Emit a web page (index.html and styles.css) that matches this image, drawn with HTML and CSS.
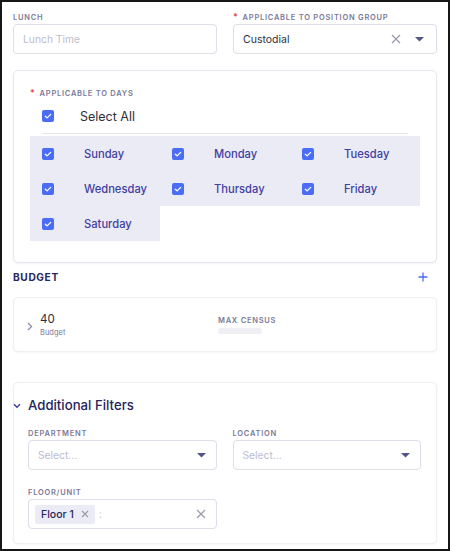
FILE: index.html
```html
<!DOCTYPE html>
<html>
<head>
<meta charset="utf-8">
<link rel="stylesheet" href="styles.css">
</head>
<body>
<div class="page">
  <div class="row2 top">
    <div class="field">
      <div class="lbl">Lunch</div>
      <div class="input"><span class="ph">Lunch Time</span></div>
    </div>
    <div class="field">
      <div class="lbl"><span class="req">*</span>Applicable to Position Group</div>
      <div class="input">
        <span class="val">Custodial</span>
        <span class="icons">
          <svg class="xicon" width="10" height="10" viewBox="0 0 10 10"><path d="M1 1L9 9M9 1L1 9" stroke="#9a9aa8" stroke-width="1.2" fill="none"/></svg>
          <svg class="caret" width="9" height="5" viewBox="0 0 9 5"><path d="M0 0H9L4.5 4.5Z" fill="#55548a"/></svg>
        </span>
      </div>
    </div>
  </div>

  <div class="card days">
    <div class="lbl"><span class="req">*</span>Applicable to Days</div>
    <div class="selall">
      <span class="cb"><svg width="12" height="12" viewBox="0 0 12 12"><path d="M3.3 6.2L5.1 7.9L8.7 4.4" stroke="#fff" stroke-width="1.3" fill="none" stroke-linecap="round" stroke-linejoin="round"/></svg></span>
      <span class="saltxt">Select All</span>
    </div>
    <div class="daygrid">
      <div class="day"><span class="cb"><svg width="12" height="12" viewBox="0 0 12 12"><path d="M3.3 6.2L5.1 7.9L8.7 4.4" stroke="#fff" stroke-width="1.3" fill="none" stroke-linecap="round" stroke-linejoin="round"/></svg></span><span class="dtxt">Sunday</span></div>
      <div class="day"><span class="cb"><svg width="12" height="12" viewBox="0 0 12 12"><path d="M3.3 6.2L5.1 7.9L8.7 4.4" stroke="#fff" stroke-width="1.3" fill="none" stroke-linecap="round" stroke-linejoin="round"/></svg></span><span class="dtxt">Monday</span></div>
      <div class="day"><span class="cb"><svg width="12" height="12" viewBox="0 0 12 12"><path d="M3.3 6.2L5.1 7.9L8.7 4.4" stroke="#fff" stroke-width="1.3" fill="none" stroke-linecap="round" stroke-linejoin="round"/></svg></span><span class="dtxt">Tuesday</span></div>
      <div class="day"><span class="cb"><svg width="12" height="12" viewBox="0 0 12 12"><path d="M3.3 6.2L5.1 7.9L8.7 4.4" stroke="#fff" stroke-width="1.3" fill="none" stroke-linecap="round" stroke-linejoin="round"/></svg></span><span class="dtxt">Wednesday</span></div>
      <div class="day"><span class="cb"><svg width="12" height="12" viewBox="0 0 12 12"><path d="M3.3 6.2L5.1 7.9L8.7 4.4" stroke="#fff" stroke-width="1.3" fill="none" stroke-linecap="round" stroke-linejoin="round"/></svg></span><span class="dtxt">Thursday</span></div>
      <div class="day"><span class="cb"><svg width="12" height="12" viewBox="0 0 12 12"><path d="M3.3 6.2L5.1 7.9L8.7 4.4" stroke="#fff" stroke-width="1.3" fill="none" stroke-linecap="round" stroke-linejoin="round"/></svg></span><span class="dtxt">Friday</span></div>
      <div class="day"><span class="cb"><svg width="12" height="12" viewBox="0 0 12 12"><path d="M3.3 6.2L5.1 7.9L8.7 4.4" stroke="#fff" stroke-width="1.3" fill="none" stroke-linecap="round" stroke-linejoin="round"/></svg></span><span class="dtxt">Saturday</span></div>
    </div>
  </div>

  <div class="budgethead">
    <span class="bh">Budget</span>
    <svg width="10" height="10" viewBox="0 0 10 10"><path d="M5 0.5V9.5M0.5 5H9.5" stroke="#4a6cf7" stroke-width="1.3" fill="none"/></svg>
  </div>

  <div class="card budget">
    <div class="bcol">
      <svg class="chev" width="6" height="9" viewBox="0 0 6 9"><path d="M1 1L4.5 4.5L1 8" stroke="#8a89a8" stroke-width="1.3" fill="none"/></svg>
      <div>
        <div class="num">40</div>
        <div class="sub">Budget</div>
      </div>
    </div>
    <div class="mcol">
      <div class="lbl">Max Census</div>
      <div class="skel"></div>
    </div>
  </div>

  <div class="card filters">
    <div class="fhead">
      <svg class="chevd" width="8" height="6" viewBox="0 0 8 6"><path d="M1 1.2L4 4.2L7 1.2" stroke="#3d3c96" stroke-width="1.4" fill="none"/></svg>
      <span>Additional Filters</span>
    </div>
    <div class="row2 frow">
      <div class="field">
        <div class="lbl">Department</div>
        <div class="input"><span class="ph">Select...</span>
          <svg class="caret" width="9" height="5" viewBox="0 0 9 5"><path d="M0 0H9L4.5 4.5Z" fill="#55548a"/></svg>
        </div>
      </div>
      <div class="field">
        <div class="lbl">Location</div>
        <div class="input"><span class="ph">Select...</span>
          <svg class="caret" width="9" height="5" viewBox="0 0 9 5"><path d="M0 0H9L4.5 4.5Z" fill="#55548a"/></svg>
        </div>
      </div>
    </div>
    <div class="row2 frow2">
      <div class="field">
        <div class="lbl">Floor/Unit</div>
        <div class="input multi">
          <span class="tag">Floor 1
            <svg width="8" height="8" viewBox="0 0 8 8"><path d="M1 1L7 7M7 1L1 7" stroke="#9a9aa8" stroke-width="1.1" fill="none"/></svg>
          </span>
          <span class="colon">:</span>
          <svg class="clr" width="10" height="10" viewBox="0 0 10 10"><path d="M1 1L9 9M9 1L1 9" stroke="#9a9aa8" stroke-width="1.2" fill="none"/></svg>
        </div>
      </div>
      <div class="field"></div>
    </div>
  </div>
</div>
</body>
</html>
```

FILE: styles.css
```css
* { box-sizing: border-box; }
html, body { margin: 0; padding: 0; }
body {
  width: 450px;
  height: 551px;
  overflow: hidden;
  background: #fff;
  font-family: Inter, "Liberation Sans", sans-serif;
}
.page {
  width: 450px;
  height: 551px;
  border: 2px solid #161616;
  padding: 10px 11px 0 11px;
  overflow: hidden;
}
.row2 {
  display: grid;
  grid-template-columns: 1fr 1fr;
  column-gap: 16px;
}
.lbl {
  font-size: 7.5px;
  line-height: 10px;
  height: 10px;
  padding-top: 1px;
  font-weight: 600;
  letter-spacing: 0.75px;
  text-transform: uppercase;
  color: #7b7998;
  margin-bottom: 2px;
  white-space: nowrap;
}
.req {
  color: #e5484d;
  margin-right: 4px;
  font-size: 9px;
  line-height: 0;
}
.input {
  height: 30px;
  border: 1px solid #dedde8;
  border-radius: 4px;
  display: flex;
  align-items: center;
  padding: 0 10px 0 9px;
  font-size: 11px;
  position: relative;
}
.ph { color: #bdbccd; font-size: 10.3px; }
.val { color: #2f2f3a; font-size: 10.5px; flex: 1; }
.icons { display: flex; align-items: center; gap: 14px; margin-right: 2px; }
.caret { margin-left: auto; }
.card {
  border: 1px solid #e6e6ee;
  border-radius: 5px;
  background: #fff;
  box-shadow: 0 1px 2px rgba(40, 40, 90, 0.05);
}
.days {
  margin-top: 16px;
  height: 193px;
  padding: 17px 16px 0 16px;
}
.days .lbl { margin-bottom: 0; }
.selall {
  margin: 0 12px;
  height: 36px;
  padding-top: 1px;
  border-bottom: 1px solid #e4e4ea;
  display: flex;
  align-items: center;
}
.cb {
  width: 12px;
  height: 12px;
  border-radius: 2px;
  background: #4b6cf6;
  display: inline-flex;
  flex: none;
}
.saltxt {
  margin-left: 26px;
  font-size: 12.5px;
  color: #2f2f38;
}
.daygrid {
  margin-top: 2px;
  display: grid;
  grid-template-columns: repeat(3, 130px);
  grid-auto-rows: 35px;
}
.day {
  background: #ebebf6;
  display: flex;
  align-items: center;
  padding-left: 12px;
}
.dtxt {
  margin-left: 30px;
  font-size: 11.2px;
  font-weight: 500;
  color: #4240a0;
}
.budgethead {
  height: 34px;
  padding-bottom: 6px;
  display: flex;
  align-items: center;
  justify-content: space-between;
  padding-right: 9px;
}
.bh {
  font-size: 10.2px;
  font-weight: 700;
  letter-spacing: 0.6px;
  text-transform: uppercase;
  color: #27275c;
}
.budget {
  height: 55px;
  border-color: #eeeef3;
  display: flex;
  align-items: center;
  padding-left: 13px;
}
.bcol {
  width: 191px;
  display: flex;
  align-items: center;
}
.chev { margin-right: 7px; margin-top: 3px; }
.num { font-size: 11.5px; color: #2d2d3a; line-height: 15px; }
.sub { font-size: 7.5px; color: #7b7998; line-height: 11px; }
.mcol .lbl { margin-bottom: 3px; }
.skel {
  width: 44px;
  height: 6px;
  border-radius: 3px;
  background: #efeff4;
}
.filters {
  margin-top: 30px;
  height: 162px;
  border-color: #eeeef3;
  padding: 0 15px 0 14px;
}
.fhead {
  height: 44px;
  display: flex;
  align-items: center;
  margin-left: -15px;
  font-size: 13.2px;
  font-weight: 500;
  color: #25255a;
}
.chevd { margin-right: 7px; margin-top: 1px; }
.frow { margin-top: 1px; }
.frow2 { margin-top: 17px; }
.multi { padding-left: 6px; }
.tag {
  background: #ebebf6;
  height: 19px;
  border-radius: 2px;
  display: inline-flex;
  align-items: center;
  padding: 0 6px;
  font-size: 10.5px;
  font-weight: 500;
  color: #27275c;
  gap: 7px;
}
.colon { color: #d0d0dc; margin-left: 4px; font-size: 11px; }
.clr { margin-left: auto; }
```
